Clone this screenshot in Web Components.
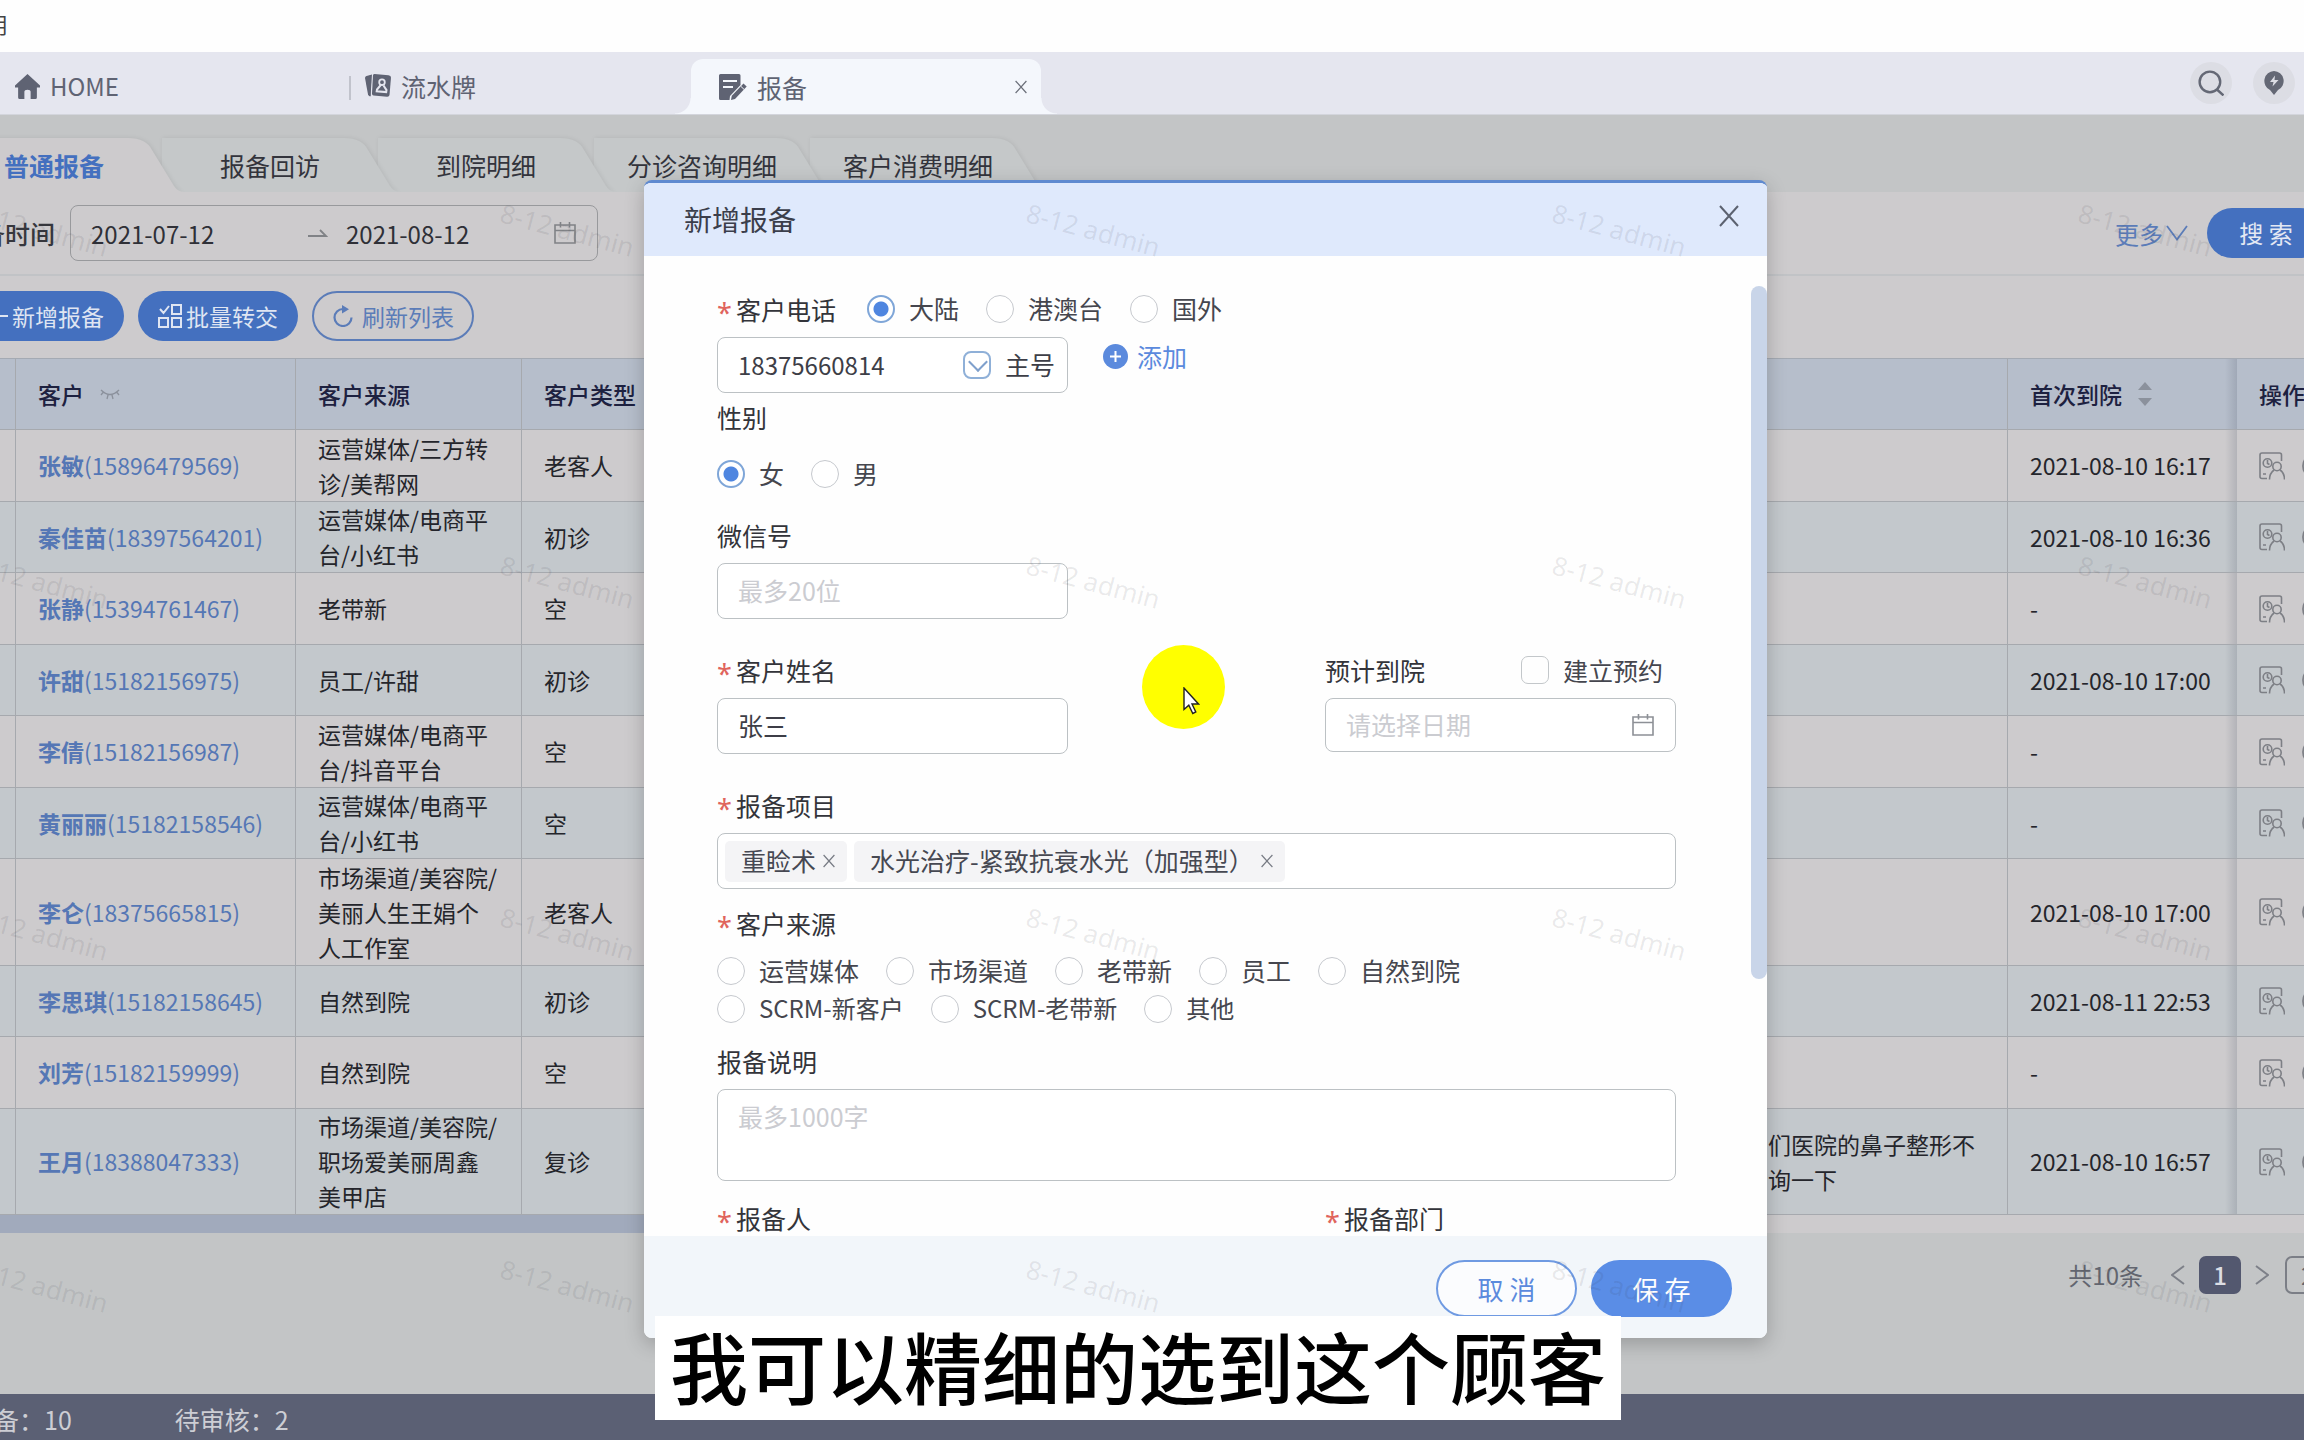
<!DOCTYPE html>
<html lang="zh-CN">
<head>
<meta charset="utf-8">
<title>报备</title>
<style>
html,body{margin:0;height:100%;}
body{font-family:"Noto Sans CJK SC","Noto Sans",sans-serif;background:#c3c5c6;overflow:hidden;}
</style>
</head>
<body>
<crm-app></crm-app>
<script>
const BASE = `*{box-sizing:border-box}button,input,textarea{font-family:inherit;margin:0}button{cursor:pointer}a{text-decoration:none}svg{display:block;flex:none}`;
const define = (name, css, html) => customElements.define(name, class extends HTMLElement {
  constructor(){
    super();
    const t = document.createElement('template');
    t.innerHTML = `<style>${BASE}${css}</style>${typeof html === 'function' ? html(this) : html}`;
    this.attachShadow({mode:'open'}).append(t.content.cloneNode(true));
  }
});

/* ---------- icons ---------- */
const ICONS = {
  home:['0 0 24 24','<path fill="currentColor" d="M12 0 24 11v2h-3v9.500q0 1.500-1.500 1.500H15v-7q0-2-3-2t-3 2v7H4.500Q3 24 3 22.500V13H0v-2Z"/>'],
  cards:['0 0 26 24','<path fill="currentColor" d="M1.500 2.500 6 1.500 5.500 22.500 4 22Z"/><path fill="currentColor" d="M0 4q0-1.500 1.500-2L7 .5 5.500 22q-2 0-2.500-1.500Z"/><path fill="currentColor" d="m9.500 0 14 1.200Q26 1.500 26 3.500L24.500 21q-.3 2-2.500 1.800L8.500 21.500Q7 21.300 7 19.500L8 1.300Q8.200 0 9.500 0Z"/><circle cx="17" cy="8.200" r="2.800" fill="none" stroke="#e5e6ef" stroke-width="1.800"/><path fill="none" stroke="#e5e6ef" stroke-width="2" d="M15.800 11 12 15.500l-.3 1.800 9.500.8.300-2-3-4.600"/>'],
  note:['0 0 28 26','<path fill="currentColor" d="M1.500 0H20q1.500 0 1.500 1.500V11L11 22l-.5 4H1.500Q0 26 0 24.500v-23Q0 0 1.500 0Z"/><path stroke="#f4f7fc" stroke-width="2" d="M4 7h14M4 13h10"/><path fill="currentColor" d="m24.500 9.500 3.200 3L16 25l-4 1 .8-4.300Z"/><path stroke="#f4f7fc" stroke-width="1" d="m22 12.500 3.200 3"/>'],
  search:['0 0 24 24','<g fill="none" stroke="currentColor" stroke-width="2.200"><circle cx="11" cy="11" r="9.500"/><path d="m17.500 18 6 5.500"/></g>'],
  pin:['0 0 20 24','<path fill="currentColor" d="M10 0a10 10 0 0 1 4 19L10 24l-4-5a10 10 0 0 1 4-19Z"/><path fill="#dcdde4" d="m11 4.500-5 6.500h3.500l-1 4.500 6-6.500h-4Z"/>'],
  cal:['0 0 22 22','<g fill="none" stroke="currentColor" stroke-width="1.600"><path d="M1 3h20v18H1ZM1 8.500h20M6.500 0v5.500M15.500 0v5.500"/></g>'],
  arrow:['0 0 20 8','<path fill="none" stroke="currentColor" stroke-width="1.800" d="M0 7h18L12 1"/>'],
  down:['0 0 22 16','<path fill="none" stroke="currentColor" stroke-width="1.800" d="m1 1 10 13.500L21 1"/>'],
  plus:['0 0 20 20','<path stroke="currentColor" stroke-width="2" d="M10 0v20M0 10h20"/>'],
  batch:['0 0 24 24','<g fill="none" stroke="currentColor" stroke-width="2"><path d="m2 5 3.500 4L11 2M14 1h9v9h-9ZM1 14h9v9H1ZM14 14h9v9h-9Z"/></g>'],
  refresh:['0 0 21 22','<path fill="none" stroke="currentColor" stroke-width="2.200" d="M11 4A8.500 8.500 0 1 0 19.500 12.500"/><path fill="currentColor" d="m10 0 7 4.200L10 8.500Z"/>'],
  eye:['0 0 20 11','<path fill="none" stroke="currentColor" stroke-width="1.300" d="M1 1q9 9 18 0M3 3.500 1 6M8 6l-1 4M12 6l1 4M17 3.500 19 6"/>'],
  sort:['0 0 14 24','<path fill="currentColor" d="m7 0 7 8H0ZM0 16h14l-7 8Z"/>'],
  person:['0 0 26 28','<g fill="none" stroke="currentColor" stroke-width="1.600"><path d="M8 26.500H3Q1 26.500 1 24.500V3Q1 1 3 1H20.500Q22.500 1 22.500 3V9M4 22h3"/><circle cx="8.500" cy="11" r="4.300"/><path d="M8.500 8v3.500l2 1"/><circle cx="18" cy="14.500" r="4.200"/><path d="M10.500 27.500q0-6 4.500-9.500M21 18q4.500 3 4.500 9.500"/></g>'],
  ring:['0 0 26 26','<circle cx="13" cy="13" r="12" fill="none" stroke="currentColor" stroke-width="1.800"/>'],
  x:['0 0 20 22','<path stroke="currentColor" stroke-width="2" d="m1 1 18 20M19 1 1 21"/>'],
  prev:['0 0 14 20','<path fill="none" stroke="currentColor" stroke-width="2" d="M13 1 1 10l12 9"/>'],
  next:['0 0 14 20','<path fill="none" stroke="currentColor" stroke-width="2" d="m1 1 12 9L1 19"/>'],
  add:['0 0 25 25','<circle cx="12.500" cy="12.500" r="12.500" fill="currentColor"/><path stroke="#fff" stroke-width="2" d="M12.500 7v11M7 12.500h11"/>'],
  pointer:['0 0 17 28','<path fill="#fff" stroke="#222" stroke-width="1.400" d="M1 1v21.500l4.800-4.300 4 8.300 3-1.500-3.800-8h6.500Z"/>']
};
const icon = (n,w,h) => `<svg width="${w}" height="${h}" viewBox="${ICONS[n][0]}" aria-hidden="true">${ICONS[n][1]}</svg>`;

/* ---------- top strip and window tabs ---------- */
define('top-strip', `:host{display:flex;align-items:center;height:52px;background:#fefefe;overflow:hidden;padding-bottom:6px}
span{margin-left:-14px;font-size:22px;line-height:32px;color:#444}`, `<span>用</span>`);

define('window-tabs', `:host{display:flex;height:63px;background:#e5e6ef;color:#5f6373;border-bottom:1px solid #d3d5dc}
nav{display:flex;flex:1;min-width:0}
a{display:flex;align-items:center;gap:10px;color:inherit;font-size:25px;line-height:34px;padding:6px 14px 0 15px;width:350px;flex:none}
a.home{font-size:24px}
a.mid{position:relative;width:341px}
a.mid::before{content:"";position:absolute;left:-1px;top:24px;height:24px;border-left:2px solid #c1c3cc}
.active{position:relative;display:flex;align-items:center;width:350px;margin-top:7px;background:#f4f7fc;border-radius:12px 12px 0 0}
.active a{flex:1;width:auto;padding:0 0 0 28px}
.active::before,.active::after{content:"";position:absolute;bottom:0;width:16px;height:16px}
.active::before{left:-16px;background:radial-gradient(circle at 0 0,transparent 15px,#f4f7fc 16px)}
.active::after{right:-16px;background:radial-gradient(circle at 100% 0,transparent 15px,#f4f7fc 16px)}
button{border:0;background:none;padding:0;color:#6a6e78}
.x{margin-right:14px}
.tools{display:flex;gap:21px;align-items:center;padding-right:9px}
.tools button{display:grid;place-items:center;width:42px;height:42px;border-radius:50%;background:#dcdde4;color:#646875}`,
`<nav><a class="home" href="#home">${icon('home',25,25)}HOME</a><a class="mid" href="#flow">${icon('cards',26,24)}流水牌</a>
<div class="active"><a href="#report">${icon('note',28,26)}报备</a><button class="x" aria-label="关闭">${icon('x',12,14)}</button></div></nav>
<div class="tools"><button aria-label="搜索">${icon('search',26,26)}</button><button aria-label="提示">${icon('pin',20,24)}</button></div>`);

/* ---------- page tabs ---------- */
define('page-tabs', `:host{display:flex;padding:23px 0 0;height:77px;overflow:hidden;background:#c3c5c6;isolation:isolate}
div{display:flex;margin-left:-54px}
button{position:relative;width:216px;height:54px;border:0;background:none;font-size:25px;color:#33343c;padding:0;line-height:51px;white-space:nowrap}
svg{position:absolute;left:0;top:0;fill:#c5c8c9;filter:drop-shadow(1px 0 2px rgba(0,0,0,.08))}
span{position:relative}
.on{color:#4470bf;font-weight:700}.on svg{fill:#cdcbcd}`,
() => `<div role="tablist">${['普通报备','报备回访','到院明细','分诊咨询明细','客户消费明细'].map((t,i)=>`<button role="tab" class="${i?'':'on'}" style="z-index:${9-i}"><svg width="240" height="54" viewBox="0 0 240 54"><path d="M0 0H182Q200 0 206 12L228 48Q232 54 238 54H0Z"/></svg><span>${t}</span></button>`).join('')}</div>`);

/* ---------- filter and tool bars ---------- */
define('filter-bar', `:host{display:flex;align-items:center;height:84px;background:#cdcbcd;border-bottom:2px solid #c1c3c6;overflow:hidden;color:#36373d}
label{font-size:25px;font-weight:500;margin-left:-45px;white-space:nowrap;line-height:36px}
.range{display:flex;align-items:center;width:528px;height:56px;margin-left:15px;border:1px solid #98999c;border-radius:8px;padding:0 21px 0 20px;color:#808286}
input{width:217px;border:0;background:none;font-size:24px;color:#2f3037;padding:0;outline:0}
.range svg:first-of-type{margin-right:18px}
.range input:last-of-type{flex:1;width:0}
a{display:flex;align-items:center;gap:3px;margin-left:auto;font-size:24px;color:#5b7cb8}
button{width:118px;height:50px;margin:0 -21px 0 19px;border:0;border-radius:25px;background:#4470bf;color:#e3e8f3;font-size:24px;line-height:50px;padding:0}`,
`<label for="from">报备时间</label><div class="range"><input id="from" value="2021-07-12">${icon('arrow',20,8)}<input aria-label="结束日期" value="2021-08-12">${icon('cal',22,22)}</div>
<a href="#more">更多${icon('down',22,16)}</a><button>搜 索</button>`);

define('tool-bar', `:host{display:flex;align-items:center;gap:14px;height:82px;background:#cdcbcd;overflow:hidden;padding-bottom:2px}
button{display:flex;align-items:center;height:50px;border:0;border-radius:25px;background:#4470bf;color:#dfe5f2;font-size:23px;line-height:34px;white-space:nowrap;gap:4px;padding:0 20px;flex:none}
button:first-of-type{margin-left:-32px}
.line{background:none;border:2px solid #5b7cb8;color:#5b7cb8;padding:0 18px;gap:9px}`,
`<button>${icon('plus',20,20)}新增报备</button><button>${icon('batch',24,24)}批量转交</button><button class="line">${icon('refresh',21,22)}刷新列表</button>`);

/* ---------- data table ---------- */
const ROWS = [
 ['张敏','15896479569','运营媒体/三方转诊/美帮网','老客人','','2021-08-10 16:17'],
 ['秦佳苗','18397564201','运营媒体/电商平台/小红书','初诊','','2021-08-10 16:36'],
 ['张静','15394761467','老带新','空','','-'],
 ['许甜','15182156975','员工/许甜','初诊','','2021-08-10 17:00'],
 ['李倩','15182156987','运营媒体/电商平台/抖音平台','空','','-'],
 ['黄丽丽','15182158546','运营媒体/电商平台/小红书','空','','-'],
 ['李仑','18375665815','市场渠道/美容院/美丽人生王娟个人工作室','老客人','','2021-08-10 17:00'],
 ['李思琪','15182158645','自然到院','初诊','','2021-08-11 22:53'],
 ['刘芳','15182159999','自然到院','空','','-'],
 ['王月','18388047333','市场渠道/美容院/职场爱美丽周鑫美甲店','复诊','们医院的鼻子整形不询一下','2021-08-10 16:57']
];
define('data-table', `:host{display:block;background:#cdcbcd}
table{width:100%;table-layout:fixed;border-collapse:separate;border-spacing:0;font-size:23px;line-height:35px;color:#24252b}
th,td{padding:0 21px 0 22px;text-align:left;vertical-align:middle;border-right:1px solid #a6a9ae;border-bottom:1px solid #a6a9ae;overflow:hidden}
th{height:72px;background:#b6becb;font-weight:500;color:#1d2140;border-top:1px solid #a4aab3;white-space:nowrap}
tr>:nth-child(1){padding:0}
tr>:nth-child(5){border-right:0}
tbody tr:nth-child(odd) td{height:72px}
tbody tr:nth-child(even) td{height:71px;background-color:#c3c8cc}
tbody tr:nth-child(7) td{height:107px}
tr>:nth-child(7){border-right:0;background-image:linear-gradient(to left,rgba(60,70,90,.18),transparent 12px);white-space:nowrap}
tr>:nth-child(8){border-right:0;white-space:nowrap;padding-right:0}
a{color:#5577b5}a b{font-weight:700}
.h{display:flex;align-items:center;gap:16px;color:inherit}.h svg{color:#8b919c}
.ops{display:flex;gap:17px;color:#7d7f85}
.ops button{border:0;background:none;padding:0;color:inherit}
.scroll{height:18px}
.thumb{width:40%;height:100%;background:#a1aabc}`,
() => `<table><colgroup><col style="width:16px"><col style="width:280px"><col style="width:226px"><col style="width:140px"><col><col style="width:262px"><col style="width:229px"><col style="width:67px"></colgroup>
<thead><tr><th></th><th><div class="h">客户${icon('eye',20,11)}</div></th><th>客户来源</th><th>客户类型</th><th></th><th></th><th><div class="h">首次到院${icon('sort',14,24)}</div></th><th>操作</th></tr></thead>
<tbody>${ROWS.map(r=>`<tr><td></td><td><a href="#customer"><b>${r[0]}</b>(${r[1]})</a></td><td>${r[2]}</td><td>${r[3]}</td><td></td><td>${r[4]}</td><td>${r[5]}</td><td><div class="ops"><button aria-label="客户详情">${icon('person',26,28)}</button><button aria-label="更多操作">${icon('ring',26,26)}</button></div></td></tr>`).join('')}</tbody></table>
<div class="scroll"><div class="thumb"></div></div>`);

define('page-nav', `:host{display:flex;justify-content:flex-end;align-items:center;padding-top:23px;color:#62656f;font-size:24px;line-height:38px;overflow:hidden}
button{border:0;background:none;color:#7d8088;padding:0;height:38px}
.n{width:42px;border-radius:7px;background:#53586f;color:#dcdde3;font-size:24px;font-weight:500;line-height:38px;margin:0 14px}
.p{margin-left:28px}
select{appearance:none;width:150px;height:38px;margin:0 -131px 0 16px;border:2px solid #7b7e86;border-radius:7px;background:none;color:#62656f;font:24px/34px "Noto Sans CJK SC",sans-serif;padding:0 14px}`,
`<span>共10条</span><button class="p" aria-label="上一页">${icon('prev',14,20)}</button><button class="n">1</button><button aria-label="下一页">${icon('next',14,20)}</button><select aria-label="每页条数"><option>20条/页</option></select>`);

define('status-bar', `:host{display:flex;gap:103px;align-items:center;height:46px;background:#5b6074;color:#cdced4;font-size:25px;line-height:36px;white-space:nowrap;padding-top:4px;overflow:hidden}
span:first-of-type{margin-left:-31px}`, `<span>报备：10</span><span>待审核：2</span>`);

/* ---------- form parts ---------- */
define('form-field', `:host{display:flex;flex-direction:column;margin-top:var(--before,36px)}
.head{display:flex;align-items:center;height:34px;padding-bottom:4px;margin-bottom:var(--after,9px)}
.req{color:#e0645c;font:27px/34px "Noto Sans",sans-serif;width:19px;padding-top:8px}
:host(:not([required])) .req{display:none}`,
`<div class="head"><span class="req">*</span><slot name="label"></slot><slot name="extra"></slot></div><slot></slot>`);

define('radio-group', `:host{display:flex;flex-wrap:wrap;column-gap:27px}
label{display:flex;align-items:center;gap:14px;height:var(--row,34px);font-size:25px;line-height:34px;color:#45464e;white-space:nowrap}
span{padding-bottom:3px}
:host(.latin) label{font-size:24px}
input{appearance:none;width:28px;height:28px;margin:0;border:1px solid #c6c9ce;border-radius:50%;background:#fff;flex:none}
input:checked{border:2px solid #7fa6d8;background:radial-gradient(circle,#4f86e0 7px,#fff 8px)}`,
(el) => el.getAttribute('options').split(',').map(o=>`<label><input type="radio" name="g"${o===el.getAttribute('value')?' checked':''}><span>${o}</span></label>`).join(''));

define('tag-chip', `:host{display:flex;align-items:center;gap:7px;height:41px;padding:0 12px 0 16px;border-radius:5px;background:#f4f4f6;font-size:25px;line-height:36px;color:#464852;white-space:nowrap}
span{padding-bottom:3px}
button{border:0;background:none;padding:0;color:#777b84}`, `<span><slot></slot></span><button aria-label="移除">${icon('x',12,14)}</button>`);

/* ---------- dialog ---------- */
define('report-dialog', `:host{display:flex;flex-direction:column;background:#fefefe;border-top:3px solid #5f8ad0;border-radius:8px;overflow:hidden;box-shadow:0 6px 20px rgba(0,0,0,.22);height:1158px;color:#33343a}
header{display:flex;align-items:center;justify-content:space-between;height:73px;padding:0 28px 0 40px;background:#dfe9fc;flex:none}
h2{margin:0;font-size:28px;font-weight:400;line-height:38px;padding-bottom:2px;color:#3b3e4b}
header button{border:0;background:none;padding:0 0 8px;color:#5c6270}
.body{position:relative;flex:1;min-height:0;overflow:hidden;padding:2px 91px 0 73px}
.bar{position:absolute;right:0;top:30px;width:16px;height:693px;border-radius:8px;background:#c9d5e9}
label,.lab{font-size:25px;line-height:34px;white-space:nowrap}
.tel{margin-right:31px}
.box{width:100%;height:56px;border:1px solid #bcc1c4;border-radius:8px;background:#fff;font-size:25px;line-height:36px;color:#3d3e47;padding:0 20px 2px;outline:0}
::placeholder{color:#cbccd1;opacity:1}
textarea.box{display:block;height:92px;line-height:34px;padding:9px 20px;resize:none}
.half{width:351px}
.two{display:flex;justify-content:space-between}
.phone{display:flex;gap:35px;align-items:flex-start}
.combo{display:flex;align-items:center;padding:0 12px 0 20px}
.combo input.v{flex:1;width:0;border:0;padding:0 0 2px;outline:0;font-size:24px;color:#3d3e47;background:none}
.combo label{display:flex;align-items:center;gap:14px}
.combo span{padding-bottom:2px}
.main{appearance:none;width:28px;height:28px;margin:0;border:2px solid #8fb0d8;border-radius:8px;position:relative}
.main::after{content:"";position:absolute;left:6px;top:2px;width:12px;height:12px;border:solid #7fa0cc;border-width:0 2px 2px 0;transform:rotate(45deg)}
.add{display:flex;align-items:center;gap:9px;height:38px;font-size:25px;line-height:36px;color:#5b8add}
.appt{display:flex;align-items:center;gap:14px;margin-left:auto;padding-right:13px;color:#45464e}
.appt input{appearance:none;width:28px;height:28px;margin:0;border:1px solid #c3c7ca;border-radius:7px}
.date{color:#8d9096;height:54px;padding-right:21px}.combo.date input.v{font-size:25px}
.tags{display:flex;align-items:center;gap:7px;padding:0 7px}
.tags input{flex:1;width:0;border:0;outline:0}
footer{display:flex;justify-content:flex-end;gap:14px;height:102px;padding:24px 35px 0 0;background:#f2f6fa;flex:none}
footer button{width:141px;height:57px;border-radius:29px;border:2px solid #6f9ae2;background:#fbfcfe;color:#5b8add;font-size:26px;line-height:50px;padding:0}
footer .ok{background:#5a8de6;border-color:#5a8de6;color:#fff}`,
`<header><h2>新增报备</h2><button aria-label="关闭">${icon('x',20,22)}</button></header>
<div class="body">
<form-field required><label slot="label" class="tel" for="tel">客户电话</label><radio-group slot="extra" options="大陆,港澳台,国外" value="大陆"></radio-group>
<div class="phone"><div class="box half combo"><input class="v" id="tel" value="18375660814"><label><input class="main" type="checkbox" checked><span>主号</span></label></div><a class="add" href="#add">${icon('add',25,25)}添加</a></div></form-field>
<form-field style="--before:9px;--after:21px"><span slot="label" class="lab">性别</span><radio-group options="女,男" value="女"></radio-group></form-field>
<form-field style="--before:29px"><label slot="label" for="wx">微信号</label><input class="box half" id="wx" placeholder="最多20位"></form-field>
<div class="two"><form-field required class="half"><label slot="label" for="nm">客户姓名</label><input class="box" id="nm" value="张三"></form-field>
<form-field class="half"><label slot="label" for="dt">预计到院</label><label slot="extra" class="appt"><input type="checkbox">建立预约</label><div class="box combo date"><input class="v" id="dt" placeholder="请选择日期">${icon('cal',22,22)}</div></form-field></div>
<form-field required><label slot="label" for="pj">报备项目</label><div class="box tags"><tag-chip>重睑术</tag-chip><tag-chip>水光治疗-紧致抗衰水光（加强型）</tag-chip><input id="pj"></div></form-field>
<form-field required style="--before:19px;--after:10px"><span slot="label" class="lab">客户来源</span><div style="--row:38px"><radio-group options="运营媒体,市场渠道,老带新,员工,自然到院"></radio-group><radio-group class="latin" options="SCRM-新客户,SCRM-老带新,其他"></radio-group></div></form-field>
<form-field style="--before:18px"><label slot="label" for="memo">报备说明</label><textarea class="box" id="memo" placeholder="最多1000字"></textarea></form-field>
<div class="two" style="--before:22px"><form-field required class="half"><label slot="label" for="who">报备人</label><input class="box" id="who"></form-field><form-field required class="half"><label slot="label" for="dep">报备部门</label><input class="box" id="dep"></form-field></div>
<div class="bar"></div></div>
<footer><button>取 消</button><button class="ok">保 存</button></footer>`);

/* ---------- overlays ---------- */
define('water-mark', `:host{position:absolute;inset:0;overflow:hidden;pointer-events:none}
div{display:grid;grid-template-columns:repeat(5,526px);grid-auto-rows:352px;margin:198px 0 0 -25px}
span{font:26px/28px "Noto Sans",sans-serif;color:rgba(50,50,60,.1);transform:rotate(15deg);transform-origin:0 50%;white-space:nowrap;height:28px;width:140px}`,
() => `<div aria-hidden="true">${'<span>8-12 admin</span>'.repeat(20)}</div>`);

define('click-spot', `:host{position:absolute;display:block;width:83px;height:84px;border-radius:50%;background:#ff0}
svg{position:absolute;left:41px;top:42px}`, icon('pointer',17,28));

define('caption-line', `:host{display:block;background:#fff;color:#000;font-size:78px;font-weight:500;line-height:98px;padding:0 15px 6px;white-space:nowrap}`, `<slot></slot>`);

define('crm-app', `:host{position:relative;display:flex;flex-direction:column;height:100vh;overflow:hidden;background:#c3c5c6}
top-strip,window-tabs,page-tabs,filter-bar,tool-bar,data-table,page-nav,status-bar{flex:none}
status-bar{margin-top:auto}
report-dialog{position:absolute;left:644px;top:180px;width:1123px}
click-spot{left:1142px;top:645px}
caption-line{position:absolute;left:655px;top:1316px}`,
`<top-strip></top-strip><window-tabs></window-tabs><page-tabs></page-tabs><filter-bar></filter-bar><tool-bar></tool-bar><data-table></data-table><page-nav></page-nav><status-bar></status-bar>
<report-dialog role="dialog" aria-label="新增报备"></report-dialog><water-mark></water-mark><click-spot></click-spot><caption-line>我可以精细的选到这个顾客</caption-line>`);
</script>
</body>
</html>
